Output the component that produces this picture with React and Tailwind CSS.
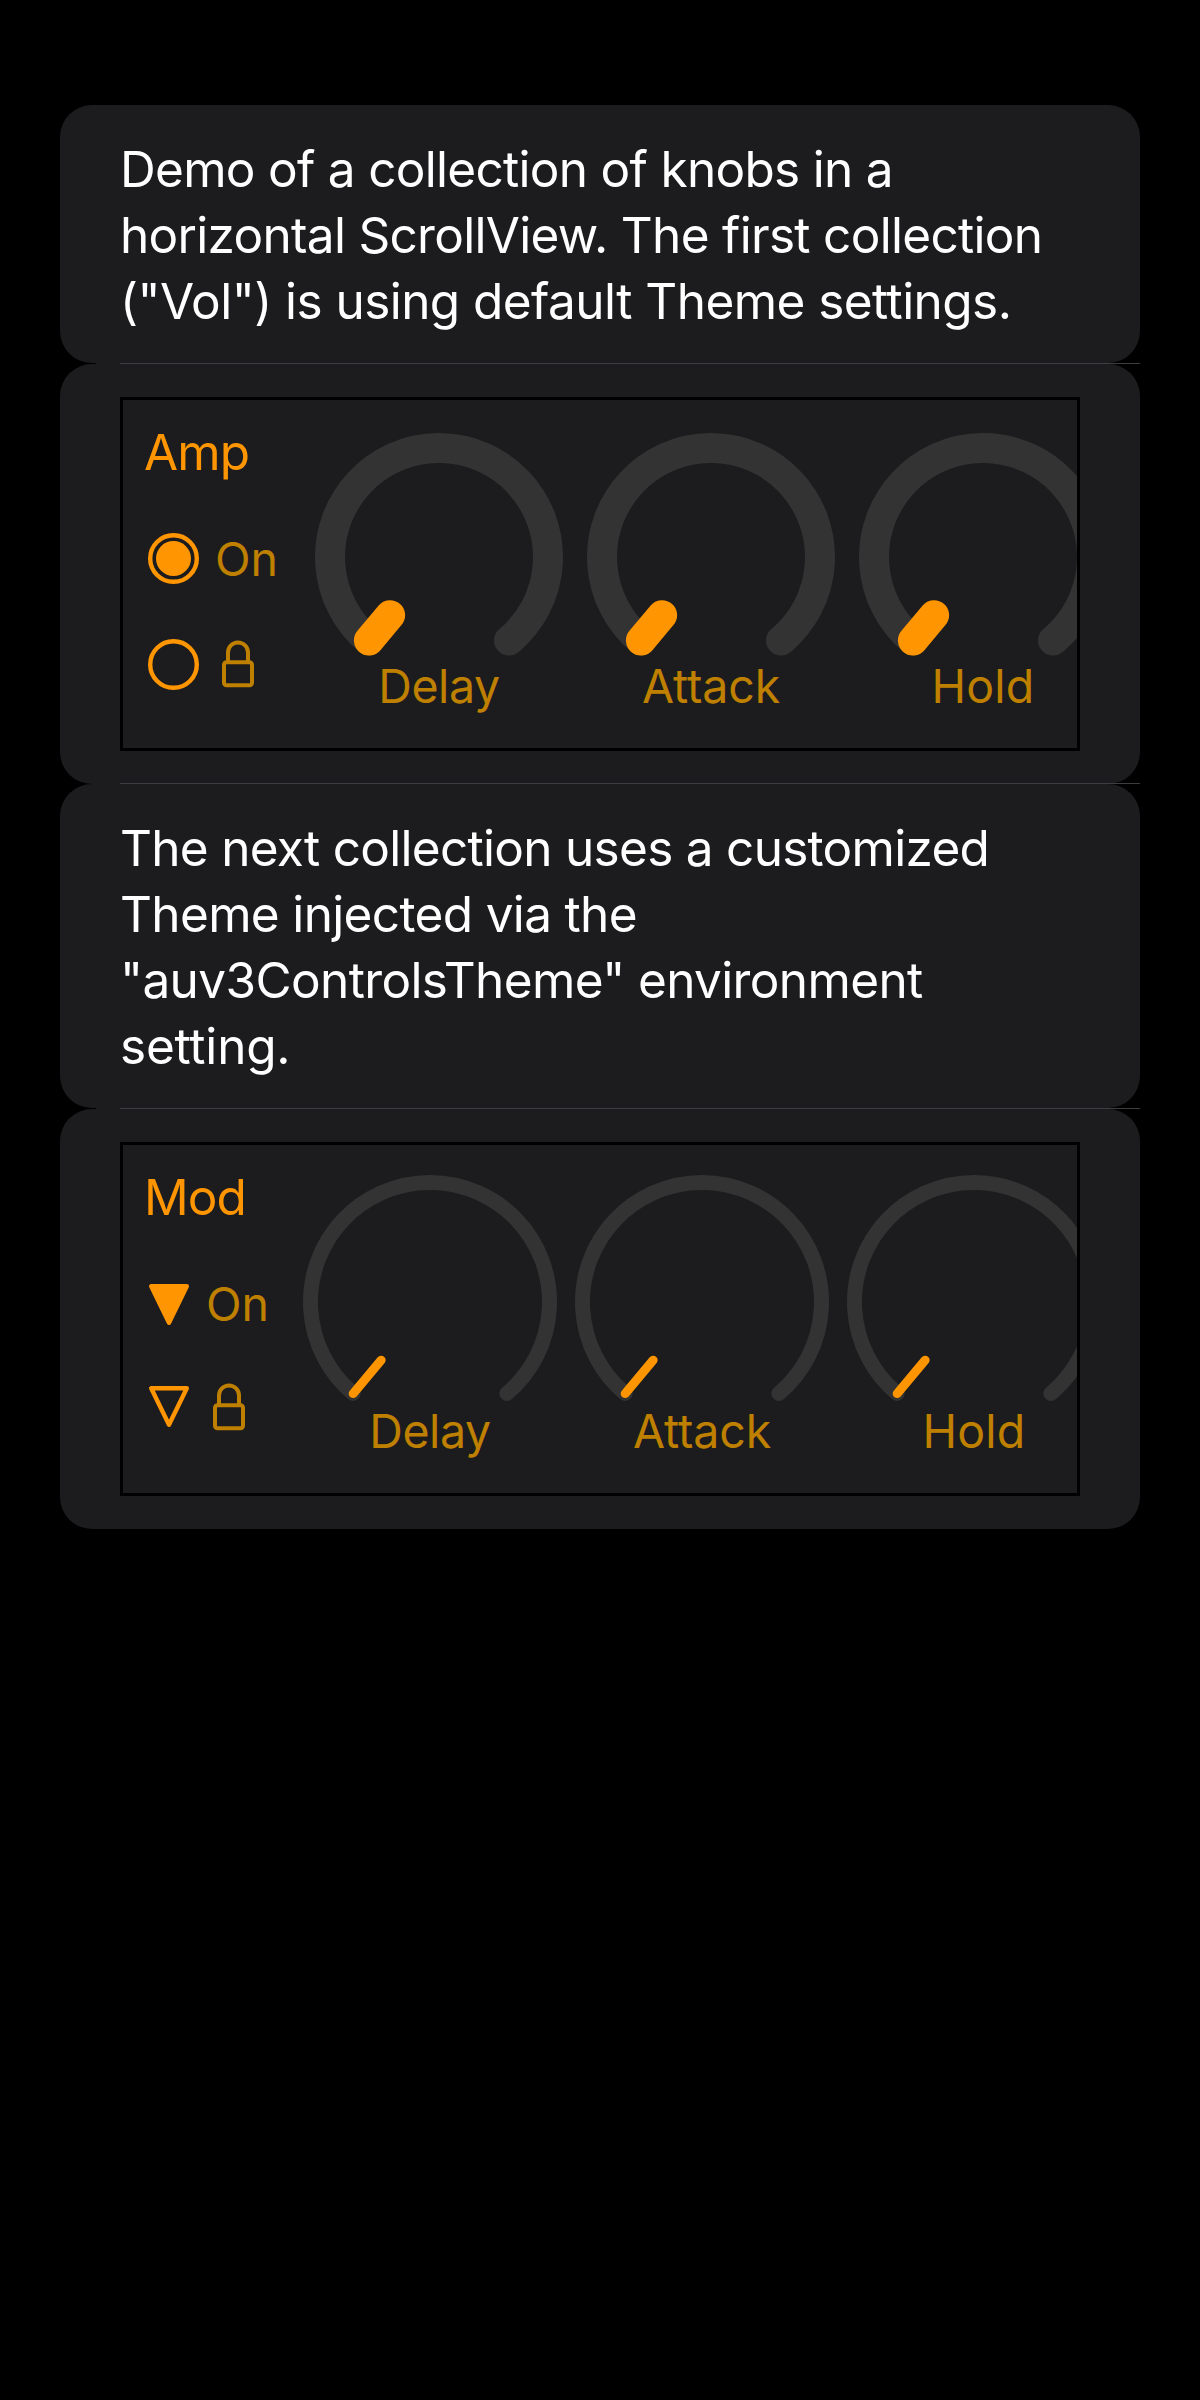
const ORANGE = "#ff9500";
const AMBER = "#bf8000";
const TRACK = "#333333";

function Card({ last, children }) {
  return (
    <>
      <section className="rounded-[32px] bg-[#1c1c1e]">{children}</section>
      {!last && (
        <div className="ml-9 flex h-px justify-end bg-[#1c1c1e]">
          <div className="h-px w-[1020px] bg-[#3d3d41]" />
        </div>
      )}
    </>
  );
}

function Note({ lines }) {
  return (
    <p className="pt-[31px] pb-[29px] pl-[60px] text-[49.5px] leading-[66px] whitespace-nowrap text-white">
      {lines.map(([text, tracking]) => (
        <span key={text} className={`block ${tracking}`}>
          {text}
        </span>
      ))}
    </p>
  );
}

function Knob({ label, tracking, radius, stroke, tip, tipStroke }) {
  const cx = 128;
  const cy = 135;
  const a = (40 * Math.PI) / 180;
  const at = (r, side) => [cx + side * r * Math.sin(a), cy + r * Math.cos(a)];
  const [x1, y1] = at(radius, -1);
  const [x2, y2] = at(radius, 1);
  const [x3, y3] = at(tip, -1);
  return (
    <div className="flex w-64 shrink-0 flex-col items-center">
      <svg width="256" height="236" viewBox="0 0 256 236" fill="none" strokeLinecap="round">
        <path
          d={`M${x1} ${y1}A${radius} ${radius} 0 1 1 ${x2} ${y2}`}
          stroke={TRACK}
          strokeWidth={stroke}
        />
        <path d={`M${x1} ${y1}L${x3} ${y3}`} stroke={ORANGE} strokeWidth={tipStroke} />
      </svg>
      <span className={`text-[46.5px] leading-[56px] text-[#bf8000] ${tracking}`}>{label}</span>
    </div>
  );
}

function RadioMark({ on }) {
  return (
    <svg width="70" height="56" viewBox="0 0 70 56" fill="none">
      <circle cx="28.5" cy="27.5" r="23.3" stroke={ORANGE} strokeWidth="4.4" />
      {on && <circle cx="28.5" cy="27.5" r="17.5" fill={ORANGE} />}
    </svg>
  );
}

function TriangleMark({ on }) {
  return (
    <svg width="61" height="56" viewBox="0 0 61 56" strokeLinejoin="round">
      <path
        d="M6.2 10.2H41.8L24 46.8Z"
        fill={on ? ORANGE : "none"}
        stroke={ORANGE}
        strokeWidth="4.4"
      />
    </svg>
  );
}

function Lock({ className }) {
  return (
    <svg
      className={className}
      width="46"
      height="56"
      viewBox="0 0 46 56"
      fill="none"
      stroke={AMBER}
      strokeWidth="4"
    >
      <rect x="9" y="25.2" width="28" height="23" rx="2.5" />
      <path d="M13 25V15.5a10 10 0 0 1 20 0V25" />
    </svg>
  );
}

const LABELS = [
  ["Delay", "tracking-[-0.42px]"],
  ["Attack", "tracking-[-0.14px]"],
  ["Hold", "tracking-[0.2px]"],
];

function Panel({ title, column, rowGap, Mark, lockClass, knob }) {
  return (
    <div className="px-[60px] py-[33px]">
      <div className="flex h-[354px] overflow-hidden border-3 border-black">
        <div className={`flex shrink-0 flex-col pt-[22px] pl-[22px] ${column}`}>
          <h2 className="-ml-px text-[49.5px] leading-[60px] tracking-[-0.9px] text-[#ff9500]">{title}</h2>
          <div className={`mt-[49px] flex flex-col ${rowGap}`}>
            <div className="flex h-14">
              <Mark on />
              <span className="text-[46.5px] leading-[56px] text-[#bf8000]">On</span>
            </div>
            <div className="flex h-14">
              <Mark />
              <Lock className={lockClass} />
            </div>
          </div>
        </div>
        <div className="flex shrink-0 gap-4 pt-[22px]">
          {LABELS.map(([label, tracking]) => (
            <Knob key={label} label={label} tracking={tracking} {...knob} />
          ))}
        </div>
      </div>
    </div>
  );
}

export default function App() {
  return (
    <main className="min-h-screen bg-black px-[60px] pt-[105px] font-[Inter,sans-serif]">
      <Card>
        <Note
          lines={[
            ["Demo of a collection of knobs in a", "tracking-[-0.7px]"],
            ["horizontal ScrollView. The first collection", "tracking-[-0.69px]"],
            ['("Vol") is using default Theme settings.', "tracking-[-0.55px]"],
          ]}
        />
      </Card>
      <Card>
        <div className="-mb-px">
          <Panel
            title="Amp"
            column="w-[188px]"
            rowGap="gap-[50px]"
            Mark={RadioMark}
            lockClass=""
            knob={{ radius: 109, stroke: 30, tip: 76, tipStroke: 30 }}
          />
        </div>
      </Card>
      <Card>
        <Note
          lines={[
            ["The next collection uses a customized", "tracking-[-0.71px]"],
            ["Theme injected via the", "tracking-[-0.65px]"],
            ['"auv3ControlsTheme" environment', "tracking-[-0.62px]"],
            ["setting.", "tracking-[-0.2px]"],
          ]}
        />
      </Card>
      <Card last>
        <Panel
          title="Mod"
          column="w-[179px]"
          rowGap="gap-[46px]"
          Mark={TriangleMark}
          lockClass="mt-0.5"
          knob={{ radius: 119.5, stroke: 15, tip: 76, tipStroke: 9 }}
        />
      </Card>
    </main>
  );
}
